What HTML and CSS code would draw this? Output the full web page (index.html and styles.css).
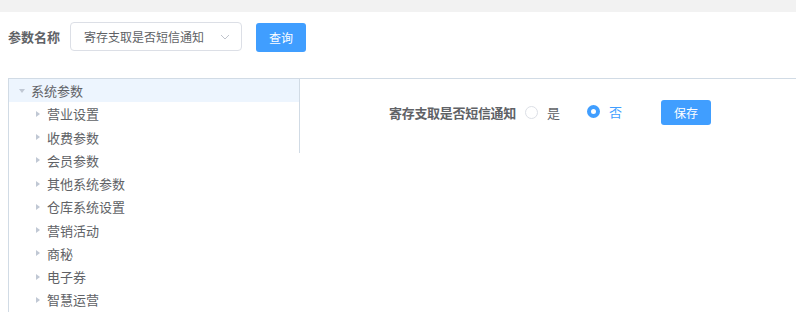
FILE: index.html
```html
<!doctype html>
<html>
    <head>
        <title>参数设置</title>
        <link rel="stylesheet" href="styles.css">
    </head>
    <body>
        <div class="topbar"></div>
        <div class="search">
            <label class="search-label">参数名称</label>
            <div class="select">
                <span class="select-value">寄存支取是否短信通知</span>
                <svg class="chevron" width="10" height="6" viewBox="0 0 10 6"><path d="M1 1 L5 5 L9 1" fill="none" stroke="#c0c4cc" stroke-width="1"/></svg>
            </div>
            <button class="btn btn-query">查询</button>
        </div>
        <div class="panel">
            <ul class="tree">
                <li class="node root"><span class="caret down"></span><span>系统参数</span></li>
                <li class="node child"><span class="caret"></span><span>营业设置</span></li>
                <li class="node child"><span class="caret"></span><span>收费参数</span></li>
                <li class="node child"><span class="caret"></span><span>会员参数</span></li>
                <li class="node child"><span class="caret"></span><span>其他系统参数</span></li>
                <li class="node child"><span class="caret"></span><span>仓库系统设置</span></li>
                <li class="node child"><span class="caret"></span><span>营销活动</span></li>
                <li class="node child"><span class="caret"></span><span>商秘</span></li>
                <li class="node child"><span class="caret"></span><span>电子券</span></li>
                <li class="node child"><span class="caret"></span><span>智慧运营</span></li>
            </ul>
            <section class="detail">
                <div class="field">
                    <span class="field-label">寄存支取是否短信通知</span>
                    <span class="radio"><span class="radio-dot"></span><span class="radio-text">是</span></span>
                    <span class="radio checked"><span class="radio-dot"></span><span class="radio-text">否</span></span>
                    <button class="btn btn-save">保存</button>
                </div>
            </section>
        </div>
    </body>
</html>
```

FILE: styles.css
```css
html, body {
    margin: 0;
    background: white;
    font-family: "Microsoft YaHei", "Noto Sans CJK SC", sans-serif;
    color: #606266;
    font-size: 13px;
}
body {
    height: 312px;
    overflow: hidden;
}
.topbar {
    height: 12px;
    background: #f2f2f2;
}
.search {
    display: flex;
    align-items: flex-start;
    padding: 10px 0 0 8px;
    height: 29px;
}
.search-label {
    font-weight: bold;
    width: 62px;
    line-height: 29px;
}
.select {
    box-sizing: border-box;
    width: 172px;
    height: 29px;
    border: 1px solid #dcdfe6;
    border-radius: 4px;
    display: flex;
    align-items: center;
    padding-left: 13px;
    font-size: 12px;
}
.select-value {
    flex: 1;
}
.chevron {
    margin-right: 11px;
}
.btn {
    border: none;
    border-radius: 3px;
    background: #409eff;
    color: white;
    font-family: inherit;
    font-size: 12px;
    padding: 0;
    width: 50px;
}
.btn-query {
    height: 29px;
    margin: 1px 0 0 14px;
}
.panel {
    margin: 27px 0 0 8px;
    border-top: 1px solid #d1dbe5;
    border-left: 1px solid #d1dbe5;
    display: flex;
    align-items: flex-start;
    height: 233px;
}
.tree {
    list-style: none;
    margin: 0;
    padding: 0;
    width: 290px;
}
.node {
    height: 23.25px;
    display: flex;
    align-items: center;
    gap: 3px;
}
.root {
    background: #edf5fe;
    padding-left: 6px;
}
.child {
    padding-left: 22px;
}
.caret {
    width: 13px;
    height: 8px;
    display: flex;
    align-items: center;
    justify-content: center;
}
.caret::before {
    content: "";
    border-left: 4px solid #c0c8d4;
    border-top: 3.5px solid transparent;
    border-bottom: 3.5px solid transparent;
}
.caret.down::before {
    border-left: 3.5px solid transparent;
    border-right: 3.5px solid transparent;
    border-top: 4px solid #c0c8d4;
    border-bottom: none;
}
.detail {
    flex: 1;
    height: 74px;
    border-left: 1px solid #d1dbe5;
    box-sizing: border-box;
    padding: 21px 0 0 89px;
}
.field {
    display: flex;
    align-items: center;
    height: 25px;
}
.field-label {
    font-weight: bold;
    width: 136px;
    letter-spacing: -0.3px;
}
.radio {
    display: flex;
    align-items: center;
    gap: 9px;
    margin-right: 27px;
}
.radio.checked {
    margin-right: 39px;
    position: relative;
    top: -1px;
}
.radio-dot {
    box-sizing: border-box;
    width: 13px;
    height: 13px;
    border-radius: 50%;
    border: 1px solid #dcdfe6;
    background: white;
}
.radio.checked .radio-dot {
    border: 4.5px solid #409eff;
}
.radio.checked .radio-text {
    color: #409eff;
}
.btn-save {
    height: 25px;
    margin-top: -1px;
}
```
